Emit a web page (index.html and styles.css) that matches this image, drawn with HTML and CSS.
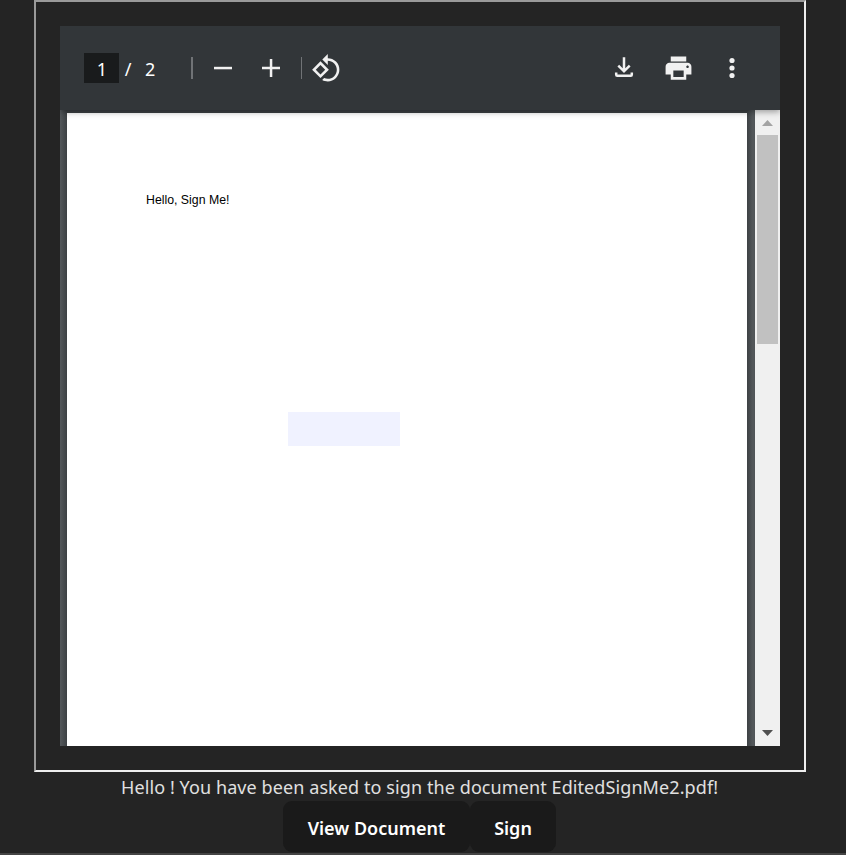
FILE: index.html
```html
<!DOCTYPE html>
<html lang="en">
<head>
<meta charset="utf-8">
<title>Sign document</title>
<link rel="stylesheet" href="styles.css">
</head>
<body>
<main class="app">
  <section class="frame">
    <div class="viewer">
      <header class="toolbar">
        <span class="page-input">1</span>
        <span class="slash">/</span>
        <span class="total">2</span>
        <span class="divider"></span>
        <svg class="icon minus" viewBox="0 0 30 30"><path d="M6 13.8h18v2.5H6z"/></svg>
        <svg class="icon plus" viewBox="0 0 30 30"><path d="M6 13.8h7.8V6h2.5v7.8H24v2.5h-7.7V24h-2.5v-7.7H6z"/></svg>
        <span class="divider thin"></span>
        <svg class="icon rotate" viewBox="0 0 24 24"><path d="M7.34 6.41L.86 12.9l6.49 6.48 6.49-6.48-6.5-6.49zM3.69 12.9l3.66-3.66L11 12.9l-3.66 3.66-3.65-3.66zm15.67-6.26C17.61 4.88 15.3 4 13 4V.76L8.76 5 13 9.24V6c1.79 0 3.58.68 4.95 2.05 2.73 2.73 2.73 7.17 0 9.9C16.58 19.32 14.79 20 13 20c-.97 0-1.94-.21-2.84-.61l-1.49 1.49C10.02 21.62 11.51 22 13 22c2.3 0 4.61-.88 6.36-2.64 3.52-3.51 3.52-9.21 0-12.72z"/></svg>
        <span class="spacer"></span>
        <svg class="icon download" viewBox="0 0 30 30"><path class="line" d="M15 4.2v14M9.300 12.600l5.700 5.700 5.700-5.700M7.200 19.500v2.200q0 1 1 1h13.600q1 0 1-1v-2.200"/></svg>
        <svg class="icon print" viewBox="0 0 24 24"><path d="M19 8H5c-1.66 0-3 1.34-3 3v6h4v4h12v-4h4v-6c0-1.66-1.34-3-3-3zm-3 11H8v-5h8v5zm3-7c-.55 0-1-.45-1-1s.45-1 1-1 1 .45 1 1-.45 1-1 1zm-1-9H6v4h12V3z"/></svg>
        <svg class="icon more" viewBox="0 0 30 30"><circle cx="15" cy="7.5" r="2.6"/><circle cx="15" cy="15" r="2.6"/><circle cx="15" cy="22.5" r="2.6"/></svg>
      </header>
      <div class="content">
        <div class="canvas">
          <article class="page">
            <p class="greeting">Hello, Sign Me!</p>
            <div class="field"></div>
          </article>
        </div>
        <div class="scrollbar">
          <svg class="arrow up" viewBox="0 0 11 6"><path d="M0 6l5.5-6L11 6z"/></svg>
          <div class="thumb"></div>
          <svg class="arrow down" viewBox="0 0 11 6"><path d="M0 0h11L5.5 6z"/></svg>
        </div>
      </div>
    </div>
  </section>
  <p class="message">Hello ! You have been asked to sign the document EditedSignMe2.pdf!</p>
  <div class="actions">
    <button class="btn view">View Document</button>
    <button class="btn sign">Sign</button>
  </div>
  <div class="bottom-line"></div>
</main>
</body>
</html>
```
FILE: styles.css
```css
* { box-sizing: border-box; }
body {
  margin: 0;
  background: #242424;
  color: #e0e0e0;
  font-family: "Noto Sans", sans-serif;
}
p { margin: 0; }
.app {
  height: 855px;
  display: flex;
  flex-direction: column;
  overflow: hidden;
}
.frame {
  width: 772px;
  height: 772px;
  flex: none;
  margin-left: 34px;
  padding: 24px;
  border: 2px solid;
  border-color: #9a9a9a #eee #eee #9a9a9a;
}
.viewer {
  height: 720px;
  display: flex;
  flex-direction: column;
  overflow: hidden;
}
.toolbar {
  height: 84px;
  flex: none;
  display: flex;
  align-items: center;
  padding: 0 33px 0 24px;
  background: #323639;
  color: #fff;
  font-size: 18px;
  box-shadow: 0 2px 6px rgba(0, 0, 0, .35);
  position: relative;
  z-index: 1;
}
.page-input {
  width: 35px;
  height: 30px;
  line-height: 32px;
  background: #191b1c;
  text-align: center;
  padding-left: 1px;
}
.slash { width: 8px; margin: 2px 0 0 5px; text-align: center; }
.total { width: 12px; margin: 2px 34px 0 13px; }
.divider { width: 2px; height: 22px; background: #707376; }
.divider.thin { width: 1px; }
.icon { width: 30px; height: 30px; fill: #f1f1f1; flex: none; }
.minus { margin-left: 15px; }
.plus { margin: 0 15px 0 18px; }
.rotate { width: 31px; height: 31px; margin-left: 9px; }
.spacer { flex: 1; }
.line { fill: none; stroke: #f1f1f1; stroke-width: 2.5; }
.print { width: 31px; height: 32px; margin: 0 23px 0 24px; }
.content { flex: 1; display: flex; min-height: 0; }
.canvas {
  width: 695px;
  padding: 3px 8px 0 7px;
  background: linear-gradient(90deg, #54585b 0, #3d4144 7px, #3d4144 687px, #54585b 693px, #505457 695px);
}
.page { height: 633px; background: #fff; padding: 79px 0 0 79px; }
.greeting {
  height: 16px;
  font: 12.3px/16px "Liberation Sans", sans-serif;
  color: #000;
  white-space: nowrap;
}
.field { width: 112px; height: 34px; margin: 204px 0 0 142px; background: #f0f2ff; }
.scrollbar {
  width: 25px;
  display: flex;
  flex-direction: column;
  align-items: center;
  background: #f0f0f0;
}
.arrow { width: 11px; height: 6px; flex: none; }
.up { margin: 10px 0 9px; fill: #a3a3a3; }
.down { margin: auto 0 10px; fill: #505050; }
.thumb { width: 21px; height: 209px; background: #c1c1c1; }
.message {
  height: 29px;
  flex: none;
  margin-left: 121px;
  font-size: 18px;
  line-height: 31px;
  letter-spacing: .09px;
  white-space: nowrap;
}
.actions { height: 52px; display: flex; flex: none; margin-left: 283px; }
.btn {
  height: 51px;
  padding: 3px 0 0;
  border: 0;
  border-radius: 9px;
  background: #1a1a1a;
  color: #fff;
  font: 600 18px "Noto Sans", sans-serif;
}
.view { width: 187px; }
.sign { width: 86px; }
.bottom-line { height: 2px; background: #444; }
```
